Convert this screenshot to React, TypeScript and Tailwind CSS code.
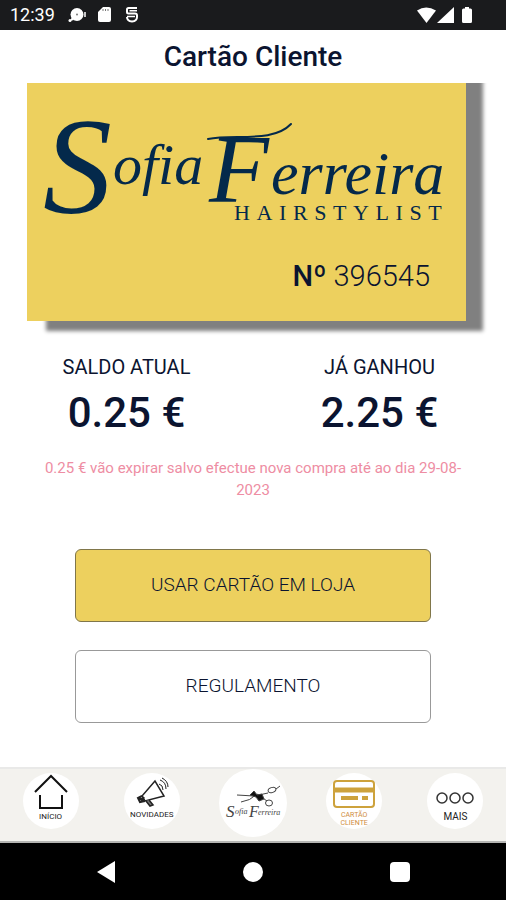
import { ReactNode } from "react";

function StatusBar() {
  return (
    <header className="flex h-[30px] items-center justify-between bg-[#1a1b1d] pl-[10px] pr-8 text-white">
      <div className="flex items-center">
        <span className="font-['Roboto'] text-[18px] leading-5">12:39</span>
        <svg className="ml-3 h-5 w-5" viewBox="0 0 20 20" fill="currentColor">
          <circle cx="10" cy="9.500" r="6.500" />
          <circle cx="3" cy="15.500" r="1.500" />
          <path d="M5 12l2 3-4 1z" />
          <path d="M18 7v5" stroke="currentColor" strokeWidth="1.500" />
          <circle cx="10" cy="9.500" r="1" fill="#777" />
        </svg>
        <svg className="ml-2 h-5 w-5" viewBox="0 0 20 20" fill="currentColor">
          <path d="M8 2h6q2 0 2 2v11q0 2-2 2H5q-2 0-2-2V7z" />
          <path d="M8 4v2M10.500 4v2M13 4v2" stroke="#777" strokeWidth="1" />
        </svg>
        <svg className="ml-2 h-5 w-5" viewBox="0 0 20 20" fill="none" stroke="currentColor" strokeWidth="2">
          <path d="M14 3H5.500Q4 3 4 4.500V7q0 1.500 1.500 1.500H12q2 0 2 2V12q0 4-5 4.500Q4 16 4 12" />
          <path d="M6.500 5.700H14M4 11.500h8" strokeWidth="1.500" />
        </svg>
      </div>
      <svg className="h-5 w-[58px]" viewBox="0 0 58 20" fill="currentColor">
        <path d="M1 5.500Q10-.5 20 5.500L10.500 18z" />
        <path d="M38 2v16H21z" />
        <path d="M49 2h4v1.500h1.500q1.500 0 1.500 1.500v11.500q0 1.500-1.500 1.500h-7q-1.500 0-1.500-1.500V5q0-1.500 1.500-1.500H49z" />
      </svg>
    </header>
  );
}

function BrandLogo() {
  return (
    <svg
      className="w-full text-[#04294b]"
      viewBox="0 0 439 164"
      fill="currentColor"
      role="img"
      aria-label="Sofia Ferreira Hairstylist"
    >
      <g className="font-['Liberation_Serif'] italic">
        <text x="16" y="130" fontSize="138">S</text>
        <text x="86" y="101" fontSize="58">ofia</text>
        <text x="182" y="119" fontSize="98">F</text>
        <text x="244" y="111" fontSize="62">erreira</text>
      </g>
      <path
        d="M181 56C208 51 246 60 264 41"
        fill="none"
        stroke="currentColor"
        strokeWidth="2"
        strokeLinecap="round"
      />
      <text x="207" y="137" fontSize="22" className="font-['Liberation_Serif'] tracking-[0.3em]">
        HAIRSTYLIST
      </text>
    </svg>
  );
}

function ClientCard() {
  return (
    <div className="overflow-hidden pb-5 pl-[27px] pr-10">
      <div className="-mt-5 bg-[#edd05e] pb-[26px] pt-5 shadow-[18px_11px_4px_-1px_#808080]">
        <BrandLogo />
        <p className="pr-9 pt-[10px] text-right text-[29px] font-light leading-[38px]">
          <span className="font-medium">Nº</span> 396545
        </p>
      </div>
    </div>
  );
}

function Balance({ label, value }: { label: string; value: string }) {
  return (
    <div className="text-center">
      <h2 className="text-[20px] leading-7">{label}</h2>
      <p className="pt-2 text-[42px] font-medium leading-[48px]">{value}</p>
    </div>
  );
}

function NavItem({ label, children, className = "text-[8px] text-[#222]" }: { label: string; children: ReactNode; className?: string }) {
  return (
    <li className="flex justify-center">
      <button className={`flex h-14 w-14 flex-col items-center rounded-full bg-white ${className}`}>
        {children}
        <span className="whitespace-pre-line leading-[8px]">{label}</span>
      </button>
    </li>
  );
}

function BottomNav() {
  return (
    <nav className="border-y-2 border-t-[#e9e9e8] border-b-[#b5b5b3] bg-[#f3f2ee]">
      <ul className="grid h-[72px] grid-cols-5 items-start pt-1">
        <NavItem label="INÍCIO">
          <svg className="mb-1 h-9 w-9 shrink-0" viewBox="0 0 36 36" fill="none" stroke="#111" strokeWidth="2">
            <path d="M2 19L18 3l16 16M7 22v13h22V22" />
          </svg>
        </NavItem>
        <NavItem label="NOVIDADES">
          <svg className="mb-[2px] h-9 w-10 shrink-0" viewBox="0 0 40 36" fill="none" stroke="#222" strokeWidth="1.500">
            <path d="M23 8L10 23l3 5 19-5z" />
            <path d="M10 23l-4 2 2 4 5-1M6 25l6 2M9 29l3-5" strokeWidth="2" />
            <path d="M14 28l4 5 3-1-4-5" fill="#777" />
            <path d="M27 11q4 1 4 6M28 7q6 2 6 9M30 5q6 3 6 9" strokeWidth="1" />
          </svg>
        </NavItem>
        <li className="flex justify-center">
          <button className="-mt-1 flex h-[68px] w-[68px] items-center justify-center rounded-full bg-white">
            <svg className="h-[60px] w-[60px]" viewBox="0 0 60 60" fill="none" stroke="#444" role="img" aria-label="Sofia Ferreira">
              <path d="M14 22l17 1 14-3M18 29q9-1 16-8l10 7" />
              <ellipse cx="49" cy="17" rx="4" ry="2.500" transform="rotate(-20 49 17)" />
              <ellipse cx="46" cy="30" rx="3.500" ry="3" />
              <path d="M53 16l4-3" />
              <path d="M27 22l4-4 3 4 5-1 2 5-5 2-3-4z" fill="#111" />
              <g className="font-['Liberation_Serif'] italic" fill="#444" stroke="none">
                <text x="3" y="44" fontSize="17">S</text>
                <text x="12" y="41" fontSize="8">ofia</text>
                <text x="26" y="44" fontSize="16">F</text>
                <text x="35" y="42" fontSize="8">erreira</text>
              </g>
            </svg>
          </button>
        </li>
        <NavItem label={"CARTÃO\nCLIENTE"} className="text-[7px] text-[#cf8c3c]">
          <svg className="mb-[2px] h-9 w-[42px] shrink-0" viewBox="0 0 42 36" fill="none" stroke="#cda23c" strokeWidth="2">
            <rect x="1" y="8" width="40" height="26" rx="3" />
            <path d="M1 17h40" strokeWidth="5" />
            <path d="M8 25h17M29 25h6" strokeWidth="4" />
          </svg>
        </NavItem>
        <NavItem label="MAIS" className="text-[10px] text-[#222]">
          <svg className="mb-1 h-9 w-[38px] shrink-0" viewBox="0 0 38 36" fill="none" stroke="#333" strokeWidth="1.500">
            <circle cx="6" cy="25" r="5" />
            <circle cx="19" cy="25" r="5" />
            <circle cx="32" cy="25" r="5" />
          </svg>
        </NavItem>
      </ul>
    </nav>
  );
}

function SystemBar() {
  return (
    <footer className="grid h-[57px] grid-cols-3 items-center justify-items-center bg-black px-8 text-white">
      <button aria-label="Voltar">
        <svg className="h-6 w-5" viewBox="0 0 20 24" fill="currentColor">
          <path d="M19 1v22L1 12z" />
        </svg>
      </button>
      <button aria-label="Ecrã inicial" className="h-5 w-5 rounded-full bg-white" />
      <button aria-label="Recentes" className="h-5 w-5 rounded-sm bg-white" />
    </footer>
  );
}

export default function App() {
  return (
    <div className="flex min-h-screen flex-col bg-white font-['Roboto',sans-serif] text-[#0b1430]">
      <StatusBar />
      <main className="flex-1">
        <h1 className="pb-2 pt-[9px] text-center text-[28px] font-medium leading-9">Cartão Cliente</h1>
        <ClientCard />
        <section className="grid grid-cols-2 pt-3">
          <Balance label="SALDO ATUAL" value="0.25 €" />
          <Balance label="JÁ GANHOU" value="2.25 €" />
        </section>
        <p className="px-9 pt-5 text-center text-[15px] leading-[22px] text-[#ee8da3]">
          0.25 € vão expirar salvo efectue nova compra até ao dia 29-08-2023
        </p>
        <div className="flex flex-col gap-7 px-[75px] pb-8 pt-12 text-[19px] font-light">
          <button className="h-[73px] rounded-md border border-[#80764a] bg-[#edd05e]">USAR CARTÃO EM LOJA</button>
          <button className="h-[73px] rounded-md border border-[#999]">REGULAMENTO</button>
        </div>
      </main>
      <BottomNav />
      <SystemBar />
    </div>
  );
}
